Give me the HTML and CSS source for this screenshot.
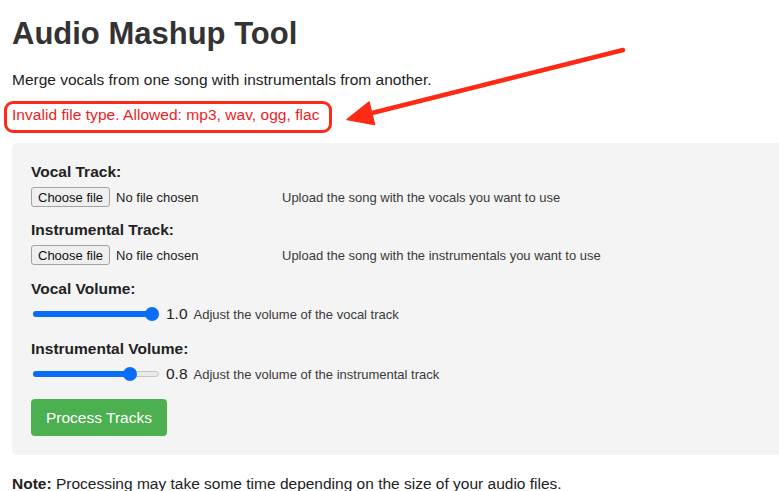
FILE: index.html
```html
<!DOCTYPE html>
<html lang="en">
<head>
<meta charset="utf-8">
<title>Audio Mashup Tool</title>
<link rel="stylesheet" href="styles.css">
</head>
<body>
  <main class="page">
    <h1 class="title">Audio Mashup Tool</h1>
    <p class="lead">Merge vocals from one song with instrumentals from another.</p>

    <div class="alert"><span class="alert-text">Invalid file type. Allowed: mp3, wav, ogg, flac</span></div>

    <form class="panel">
      <div class="field field-tight">
        <label class="field-label">Vocal Track:</label>
        <div class="row">
          <div class="file">
            <button type="button" class="file-btn">Choose file</button>
            <span class="file-name">No file chosen</span>
          </div>
          <span class="hint">Upload the song with the vocals you want to use</span>
        </div>
      </div>

      <div class="field">
        <label class="field-label">Instrumental Track:</label>
        <div class="row">
          <div class="file">
            <button type="button" class="file-btn">Choose file</button>
            <span class="file-name">No file chosen</span>
          </div>
          <span class="hint">Upload the song with the instrumentals you want to use</span>
        </div>
      </div>

      <div class="field field-loose">
        <label class="field-label">Vocal Volume:</label>
        <div class="row">
          <div class="range" style="--v:1">
            <div class="range-fill"></div>
            <div class="range-thumb"></div>
          </div>
          <span class="range-value">1.0</span>
          <span class="hint hint-tight">Adjust the volume of the vocal track</span>
        </div>
      </div>

      <div class="field">
        <label class="field-label">Instrumental Volume:</label>
        <div class="row">
          <div class="range" style="--v:0.8">
            <div class="range-fill"></div>
            <div class="range-thumb"></div>
          </div>
          <span class="range-value">0.8</span>
          <span class="hint hint-tight">Adjust the volume of the instrumental track</span>
        </div>
      </div>

      <button type="button" class="submit">Process Tracks</button>
    </form>

    <p class="note"><strong>Note:</strong> Processing may take some time depending on the size of your audio files.</p>

    <!-- markup arrow pointing at the error message -->
    <svg class="arrow" width="300" height="95" viewBox="0 0 300 95" aria-hidden="true">
      <line x1="283" y1="10" x2="30" y2="73.5" stroke="#fd2a16" stroke-width="4.5" stroke-linecap="round"/>
      <polygon points="7,79.5 29,62 34.5,84.5" fill="#fd2a16" stroke="#fd2a16" stroke-width="1.5" stroke-linejoin="round"/>
    </svg>
  </main>
</body>
</html>
```

FILE: styles.css
```css
html, body {
  margin: 0;
  padding: 0;
  background: #ffffff;
  overflow: hidden;
}

body {
  font-family: "Liberation Sans", Arial, sans-serif;
  font-size: 15.5px;
  color: #222;
}

.page {
  position: relative;
  padding: 16px 0 0 12px;
  width: 800px;
}

.title {
  margin: 0 0 19px;
  font-size: 31px;
  line-height: 36px;
  font-weight: bold;
  color: #333;
}

.lead {
  margin: 0 0 12px;
  line-height: 18px;
}

.alert {
  width: max-content;
  margin: 0 0 10px -8px;
  padding: 2px 10px 6px 5px;
  border: 3px solid #fd2a16;
  border-radius: 9px;
  line-height: 18px;
}

.alert-text {
  color: #ee1d1d;
  letter-spacing: 0.04px;
}

.panel {
  background: #f4f4f4;
  border-radius: 5px;
  padding: 20px 19px 19px;
  width: 800px;
  box-sizing: border-box;
}

.field {
  display: flex;
  flex-direction: column;
  gap: 6px;
  margin-bottom: 15px;
}

.field-tight {
  margin-bottom: 14px;
}

.field-loose {
  margin-bottom: 16px;
}

.field-label {
  font-weight: bold;
  line-height: 18px;
  color: #222;
}

.row {
  display: flex;
  align-items: center;
  height: 20px;
}

.file {
  display: flex;
  align-items: center;
  width: 251px;
  flex: none;
}

.file-btn {
  height: 20px;
  padding: 0 6px;
  font-family: inherit;
  font-size: 13px;
  color: #111;
  background: #efefef;
  border: 1px solid #a3a3a3;
  border-radius: 3px;
}

.file-name {
  margin-left: 6px;
  font-size: 13px;
  color: #222;
}

.hint {
  font-size: 13px;
  color: #3a3a3a;
}

.hint-tight {
  margin-left: 6px;
}

/* range slider: 126px track, 14px thumb travelling over 112px */
.range {
  position: relative;
  flex: none;
  width: 126px;
  height: 6px;
  margin-left: 2px;
  box-sizing: border-box;
  background: #e9e9e9;
  border: 1px solid #c6c6c6;
  border-radius: 3px;
}

.range-fill {
  position: absolute;
  left: -1px;
  top: -1px;
  height: 6px;
  width: calc(7px + var(--v) * 112px);
  background: #0a6df8;
  border-radius: 3px;
}

.range-thumb {
  position: absolute;
  top: -5px;
  left: calc(var(--v) * 112px - 1px);
  width: 14px;
  height: 14px;
  border-radius: 50%;
  background: #0a6df8;
}

.range-value {
  margin-left: 7px;
  color: #222;
}

.submit {
  display: block;
  padding: 0 15px;
  height: 37px;
  font-family: inherit;
  font-size: 15.5px;
  color: #ffffff;
  background: #4caf50;
  border: none;
  border-radius: 4px;
}

.note {
  margin: 20px 0 0;
  line-height: 18px;
  color: #222;
}

.arrow {
  position: absolute;
  left: 340px;
  top: 40px;
}
```
